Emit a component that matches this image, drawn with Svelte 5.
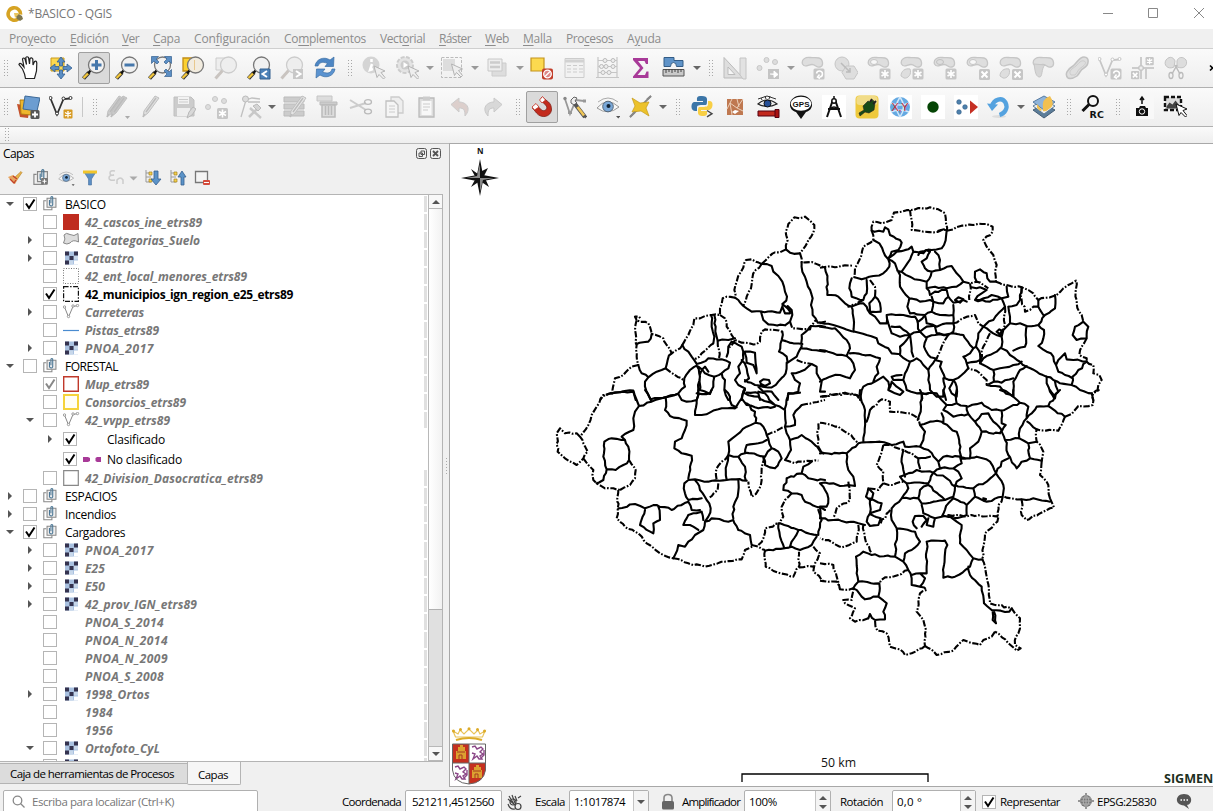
<script>
  // Adjusts tracking so that a label takes the given width.
  function fit(el, width) {
    if (!width) return;
    el.style.letterSpacing = '0px';
    const natural = el.getBoundingClientRect().width;
    el.style.letterSpacing = (width - natural) / el.textContent.length + 'px';
  }

  const menus = [
    ['P', 'ro', 'y', 'ecto', 47, 9], ['', '', 'E', 'dición', 39, 70], ['', '', 'V', 'er', 17, 122], ['', '', 'C', 'apa', 27, 153],
    ['Con', '', 'f', 'iguración', 76, 194], ['Co', '', 'm', 'plementos', 82, 284], ['Vect', '', 'o', 'rial', 45, 380],
    ['', '', 'R', 'áster', 32, 439], ['', '', 'W', 'eb', 24, 485], ['', '', 'M', 'alla', 29, 523], ['Pro', '', 'c', 'esos', 47, 566], ['A', '', 'y', 'uda', 34, 627]
  ].map((m, i, a) => ({ pre: m[0] + m[1], key: m[2], post: m[3], w: m[4], gap: i ? m[5] - a[i - 1][5] - a[i - 1][4] : 9 }));

  const mag = (o = 1, inner = '#f1f1f1') => `<g opacity="${o}"><path d="M1.5 22.5L7 16.5" stroke="#333" stroke-width="4"/><path d="M1.5 22L6.5 17" stroke="#f3c73c" stroke-width="2.4"/><path d="M6 17.500L9 14" stroke="#111" stroke-width="2.4"/><circle cx="14.500" cy="9" r="8" fill="${inner}" stroke="#777" stroke-width="1.300"/></g>`;
  const gmag = `<path d="M1.500 22.500L9 14" stroke="#c9c4c0" stroke-width="3"/><circle cx="14.500" cy="9" r="8" fill="#eee" stroke="#ccc" stroke-width="1.300"/>`;
  const cursor = (x, y, f = '#eee', s = '#b4b4b4') => `<path transform="translate(${x} ${y})" d="M0 0l11 5-4 1.500 4 5-1.500 1.500-4.500-4.500-2 3z" fill="${f}" stroke="${s}"/>`;
  const pencil = (x = 0, f = '#ddd') => `<path transform="translate(${x} 0)" d="M5 22l1-6L17 1l4 2-11 15z" fill="${f}" stroke="#c0c0c0"/><path transform="translate(${x} 0)" d="M8 17L18 3M5 22l2-3" stroke="#bbb" stroke-width="1.300"/>`;
  const badge = (x, y, g) => `<g transform="translate(${x} ${y})"><rect width="11" height="11" rx="1.500" fill="#c6c6c6"/>${g}</g>`;
  const star = '<path d="M5.500 1.500v8M2 3.500l7 4M9 3.500l-7 4" stroke="#fff" stroke-width="1.600"/>';
  const cross = '<path d="M2.500 2.500l6 6M8.500 2.500l-6 6" stroke="#fff" stroke-width="2"/>';
  const turn = '<path d="M3 5a3 3 0 1 1 3 3.500M6 6l-2 2.500 2.500 1.500" fill="none" stroke="#fff" stroke-width="1.500"/>';
  const blob = (extra = '') => `<path d="M1.500 8C0 3 5 1 9 1.500s5-.5 9 .5 5 8 1 9-4-2.500-8-2.500-7 4-9.500-.5z" fill="#dedede" stroke="#c6c6c6" stroke-width="1.300"/>${extra}`;
  const hole = '<ellipse cx="7" cy="6" rx="3.500" ry="2.500" fill="#f7f7f7" stroke="#c6c6c6"/>';
  const leaf = '<path d="M1 20c0-5 4-8 9-7 2 5-2 10-6 9z" fill="#dedede" stroke="#c6c6c6"/>';
  const eye = (c = '#7aa8d8') => `<path d="M1 13Q11 1 23 12Q12 21 1 13z" fill="#f8f8f8" stroke="#999"/><circle cx="12" cy="11.500" r="5.300" fill="${c}" stroke="#567"/><circle cx="12.500" cy="11" r="2" fill="#123"/><path d="M2 7Q12-1 22 7" fill="none" stroke="#aaa"/>`;
  const mini = '<path d="M20 21h4.500l-2.200 2.500z" fill="#555"/>';
  const vline = (c) => `<path d="M1.500 3.500L8 19.500L14.500 4L21 3.500" fill="none" stroke="${c}" stroke-width="1.800"/><g fill="#fff" stroke="${c}"><circle cx="1.500" cy="3" r="1.500"/><circle cx="8" cy="18.500" r="1.500"/><circle cx="14.500" cy="3.500" r="1.500"/><circle cx="21.500" cy="3" r="1.500"/></g>`;
  const raster = '<path fill="#a9c1e0" d="M0 0h13v13H0z"/><path d="M4 9h4v4H4zM9 4h4v4H9z" fill="#c7d7ea"/><path fill="#35334f" d="M0 0h4v4H0zM9 0h4v4H9zM4.500 4.500h4v4h-4zM0 9h4v4H0z"/><path fill="#fff" d="M9 9h4v4H9z"/>';

  const icons = {
    hand: '<path d="M6.500 13L3 8.500Q3.500 6.500 5.500 8L8 11L6.500 3Q7.500 1 9 3L10.500 8.500L9.800 1.500Q11 0 12.500 1.500L13.500 8L14 2.500Q15.500 1 16.800 3L17 9L18.500 5.500Q20.500 4.500 20.800 7L20.500 15L18.500 22.500L9.500 22.500Q9 18 6.500 13z" fill="#fff" stroke="#222" stroke-width="1.200"/>',
    pan: '<path d="M2 2h13v13H2z" fill="#fcd94f" stroke="#c99a1c"/><path d="M12 1l4 5h-2.500v4h-3V6H8zM12 23l4-5h-2.500v-4h-3v4H8zM1 12l5-4v2.500h4v3H6V16zM23 12l-5-4v2.500h-4v3h4V16z" fill="#5b8ec4" stroke="#35608f" stroke-width=".8"/>',
    zin: mag() + '<path d="M14.500 4v10M9.500 9h10" stroke="#4577ab" stroke-width="3"/>',
    zout: mag() + '<path d="M9.500 9h10" stroke="#4577ab" stroke-width="3"/>',
    full: mag() + '<path d="M3.500.5h7L8 3l3 3-2 2-3-3-2.500 2.500zM23.500.5v7L21 5l-3 3-2-2 3-3L16.500.5zM23.500 20.500h-7L19 18l-3-3 2-2 3 3 2.500-2.500z" fill="#5b8ec4" stroke="#35608f" stroke-width=".7"/>',
    zsel: '<path d="M2 2h11v13H2z" fill="#fcd130" stroke="#c28d14" stroke-width="1.300"/>' + mag(1, '#f2ecdf') + '<path d="M13.500 4v10" stroke="#e8c88d"/>',
    zlay: '<path d="M2 2h9v12H2z" fill="#eee" stroke="#ccc"/>' + gmag,
    zlast: mag() + '<path d="M13 13h10v10H13z" fill="#4d82b8" stroke="#35608f"/><path d="M20 15l-4.500 3 4.500 3" fill="none" stroke="#fff" stroke-width="2"/>',
    znext: gmag + '<path d="M13 13h10v10H13z" fill="#c8c8c8"/><path d="M16 15l4.500 3-4.500 3" fill="none" stroke="#fff" stroke-width="2"/>',
    refresh: '<path d="M2 10C3 3 11 0 17 4l4-3-.5 9.500H12l2.500-3C9 5 6 7 5 10z" fill="#4d86c4" stroke="#3b6ea5" stroke-width=".7"/><path d="M22 13c-1 7-9 10-15 6l-4 3 .5-9H12l-2.500 3C15 18 18 17 19 13z" fill="#5b93d0" stroke="#3b6ea5" stroke-width=".7"/>',
    info: '<circle cx="9" cy="9" r="8.500" fill="#d4d4d4"/><path d="M9.500 3v3M10 8L8 14l3-1" stroke="#fff" stroke-width="2.500" fill="none"/>' + cursor(12, 10),
    act: '<circle cx="10" cy="9" r="8" fill="#e4e4e4" stroke="#ccc" stroke-width="2" stroke-dasharray="4 1.500"/><circle cx="10" cy="9" r="4.500" fill="#ccc"/><path d="M8.500 6l4.500 3-4.500 3z" fill="#fff"/>' + cursor(13, 10),
    sel: '<path d="M1.500 1.500h20v20h-20z" fill="none" stroke="#bbb" stroke-dasharray="3 1.500"/><path d="M3 3h12v12H3z" fill="#ddd"/>' + cursor(11.500, 8),
    form: '<path d="M7 7h14v13H7z" fill="#ddd" stroke="#ccc"/><path d="M3 3h14v12H3z" fill="#eee" stroke="#c8c8c8"/><path d="M5 6.500h10M5 11h10" stroke="#ccc" stroke-width="2.500"/>',
    desel: '<path d="M1 2h13v13H1z" fill="#fcd94f" stroke="#c4941d" stroke-width="1.200"/><rect x="12" y="12.500" width="11" height="11" rx="2" fill="#c23d2a"/><circle cx="17.500" cy="18" r="3.800" fill="#d88" stroke="#fff" stroke-width="1.300"/><path d="M15 20.500l5-5" stroke="#fff" stroke-width="1.300"/>',
    table: '<path d="M2 2.500h19v19H2z" fill="#f2f2f2" stroke="#ccc"/><path d="M2 5h19" stroke="#d2d2d2" stroke-width="3"/><path d="M4 9.500h4M10 9.500h4M16 9.500h4M4 13h4M10 13h4M16 13h4M4 16h4M10 16h4M16 16h4" stroke="#ccc"/>',
    abacus: '<path d="M2 1v21M21 1v21M0 21.500h23M2 4.500h19M2 10.500h19M2 16.500h19" stroke="#c6c6c6" stroke-width="1.200"/><g fill="#eee" stroke="#bbb"><circle cx="9" cy="4.500" r="2"/><circle cx="17" cy="4.500" r="2"/><circle cx="5.500" cy="10.500" r="2"/><circle cx="10" cy="10.500" r="2"/><circle cx="17" cy="10.500" r="2"/><circle cx="7" cy="16.500" r="2"/><circle cx="13" cy="16.500" r="2"/></g>',
    sigma: '<path d="M4 2h15v6h-2l-1.500-3H9l5.500 7L8.500 19h7.500l1.500-3.500h2V22H4v-1.500l7-8.500L4 4z" fill="#a83a98"/>',
    measure: '<path d="M2 1.500h10v3h9v6h-6.500q0-4-3-4t-3 4H2z" fill="#5f93c8" stroke="#335c86"/><path d="M1 13.500h21v6.500H1z" fill="#c9c9c9" stroke="#555"/><path d="M4 13v4M7 13v3M10 13v4M13 13v3M16 13v4M19 13v3" stroke="#444"/>',
    cad: '<path d="M1 1.500L20 22H1z" fill="#dedede" stroke="#bbb"/><path d="M5 11l7 7.500H5z" fill="#f6f6f6" stroke="#bbb"/><path d="M17 2h6v21h-3L17 19z" fill="#e2e2e2" stroke="#c4c4c4"/>',
    move: '<g fill="#ddd" stroke="#c8c8c8"><circle cx="3.500" cy="12" r="2.500"/><circle cx="10.500" cy="4" r="2.500"/><circle cx="19" cy="6" r="2.500"/></g><path d="M12 13h11v10H12z" fill="#c4c4c4"/><path d="M14 18h4v-3l4 3.500-4 3V19" fill="#fff" stroke="#fff"/>',
    b1: blob() + badge(12.500, 12.500, turn),
    b2: '<circle cx="8" cy="8" r="7" fill="#dedede" stroke="#c6c6c6"/><path d="M12 10h8l4 6.500-4 6.500h-8l-4-6.500z" fill="#dedede" stroke="#c6c6c6"/><path d="M7 7l9 9M16 12v4h-4" stroke="#bbb" stroke-width="1.500" fill="none"/>',
    b3: blob(hole) + badge(12.500, 12.500, star), b4: blob() + leaf + badge(12.500, 12.500, star), b5: blob('<ellipse cx="7" cy="6" rx="3.500" ry="2.500" fill="#ddd" stroke="#c0c0c0"/>') + badge(12.500, 12.500, star),
    b6: blob(hole) + badge(13, 13, cross), b7: blob() + leaf + badge(13, 13, cross),
    b8: blob() + '<path d="M2 8c1 5 1 12 5 13s2-9 6-12z" fill="#d6d6d6" stroke="#c6c6c6"/>',
    b9: '<path d="M3 22c-4-4 0-9 5-12 4-3 6-9 11-9 6 0 5 8 0 11-4 2-4 5-7 8-3 2-7 3-9 2z" fill="#dedede" stroke="#c2c2c2" stroke-width="1.500"/><path d="M6 19c-3-4 1-6 5-9 3-3 5-6 8-5s1 4-2 6c-4 2-4 5-7 8z" fill="none" stroke="#ccc"/>',
    b10: vline('#c6c6c6') + badge(12.500, 12.500, turn),
    b11: '<path d="M10 1v22M1 12h22M15 12v11" stroke="#ccc" stroke-width="2"/><path d="M8 10h4v4H8z" fill="#eee" stroke="#c0c0c0"/>' + `<g transform="translate(14.500 1) scale(.75)">${badge(0, 0, star)}</g><g transform="translate(0 15) scale(.75)">${badge(0, 0, cross)}</g>`,
    b12: '<path d="M10 11C4 14-1 9 2 4c4-5 8-2 9 1zM13 11c8 3 11-3 9-7-3-4-8-3-9 1z" fill="#ddd" stroke="#c4c4c4"/><path d="M11 9l5 9M13 9l-5 9" stroke="#bbb" stroke-width="1.500"/><ellipse cx="7" cy="19.500" rx="2" ry="3" fill="none" stroke="#bbb" stroke-width="1.300"/><ellipse cx="17" cy="19.500" rx="2" ry="3" fill="none" stroke="#bbb" stroke-width="1.300"/>',
    source: '<path d="M1 9l13 2-2 12-8-1z" fill="#c4512b"/><path d="M4 5l13 0-2 15-10-1z" fill="#efb62c" stroke="#b37d13"/><path d="M9 1l15 2-3 13-14-2z" fill="#6c9dd1" stroke="#3c6997"/><rect x="14.500" y="15" width="9" height="9" rx="1.500" fill="#555"/><path d="M19 16.500v6M16 19.500h6" stroke="#fff" stroke-width="1.800"/>',
    newv: vline('#333') + '<rect x="14.500" y="14.500" width="9" height="9" rx="1" fill="#d69a22"/><path d="M19 16v6.500M16 17.500l6 3.500M22 17.500l-6 3.500" stroke="#fff" stroke-width="1.400"/>',
    pens: pencil(-4, '#ccc') + pencil(0, '#c8c8c8') + '<path d="M19 21h5l-2.500 3z" fill="#aaa"/>', pen: pencil(-1),
    save: '<path d="M2 2h17l3 3v16H2z" fill="#ccc" stroke="#c0c0c0"/><path d="M6 2h11v7H6z" fill="#f2f2f2"/><path d="M7 4.500h9M7 7h9" stroke="#ccc"/><path d="M5 13h13v8H5z" fill="#eee"/><path d="M15 23l2-6 4-5 3 2-4 6z" fill="#d8d8d8" stroke="#b8b8b8"/>',
    pts: '<g fill="#ddd" stroke="#c8c8c8"><circle cx="3" cy="12" r="2.500"/><circle cx="10" cy="4" r="2.500"/><circle cx="19" cy="6" r="2.500"/></g>' + badge(12, 13, star),
    vtx: '<path d="M3 22L8 5l6-2 8 1M10 7l12 0" fill="none" stroke="#c0c0c0" stroke-width="1.300"/><circle cx="7.500" cy="4" r="3" fill="#ddd" stroke="#bbb"/><path d="M12 13l11 10M11 22l8-8" stroke="#c8c8c8" stroke-width="2.500"/><path d="M15 11l4-2 4 4-3 3z" fill="#d4d4d4" stroke="#bbb"/>',
    attrs: '<path d="M1 2h20v5H1zM1 9h20v5H1zM1 16h20v5H1z" fill="#ccc" stroke="#bbb"/>' + pencil(2, '#e4e4e4'),
    trash: '<path d="M1 1h15v5H1z" fill="#ddd" stroke="#c6c6c6"/><path d="M4 7h17v3H4z" fill="#ccc" stroke="#bbb"/><path d="M6 10h13v12H6z" fill="#ddd" stroke="#bbb" stroke-width="1.500"/><path d="M9.500 11v9M12.500 11v9M15.500 11v9" stroke="#bbb" stroke-width="1.500"/>',
    cut: '<path d="M1 5l16 10M1 13l16-5" stroke="#ccc" stroke-width="2"/><ellipse cx="19" cy="7" rx="3.500" ry="2.300" fill="none" stroke="#bbb" stroke-width="1.300"/><ellipse cx="19" cy="16.500" rx="3.500" ry="2.300" fill="none" stroke="#bbb" stroke-width="1.300"/>',
    copy: '<path d="M9 2h8l4 4v12H9z" fill="#eee" stroke="#ccc" stroke-width="1.300"/><path d="M4 6h8l4 4v12H4z" fill="#f5f5f5" stroke="#c0c0c0" stroke-width="1.300"/><path d="M7 11h6M7 14h6M7 17h6" stroke="#ccc"/>',
    paste: '<path d="M4 3h15v19H4z" fill="#ddd" stroke="#bbb" stroke-width="1.300"/><path d="M6.500 6h10v14h-10z" fill="#f8f8f8"/><path d="M8 1.500h7v4H8z" fill="#ccc"/><path d="M8 9h7M8 12h7M8 15h5" stroke="#ccc"/>',
    undo: '<path d="M3 9.500l8-6.500v4c7 0 13 6 6 14 0-6-1-8-6-8v4z" fill="#dccfcc" stroke="#ccc"/>', redo: '<path d="M21 9.500l-8-6.500v4C6 7 0 13 7 21c0-6 1-8 6-8v4z" fill="#d8d8d8" stroke="#c9c9c9"/>',
    magnet: '<path d="M12 2l-1.500 3 5 5c4 4-2 8-5 4l-4-4-4 3 4 5c5 6 14 4 15-3 0-4-1-6-3-8z" fill="#c32b1d" stroke="#7d1f16" stroke-width=".8"/><path d="M12.500 1.500L9.500 5l2.500 3 3.500-3zM6 8.500L2 12l2.500 3L9 12z" fill="#fff" stroke="#c32b1d" stroke-width=".8"/>',
    tools: '<path d="M2 4l5 15L13 5l8 1" fill="none" stroke="#999" stroke-width="1.800"/><path d="M5 19h4v-3H5zM20 4.500h3v3h-3z" fill="#999"/><path d="M8 5l3-3 3 1-2 3 2 2-3 2-3-2z" fill="#eee" stroke="#666"/><path d="M12 9l10 13" stroke="#555" stroke-width="4"/><path d="M14.500 12l6.500 8.500" stroke="#f0c657" stroke-width="2.600"/><circle cx="2" cy="3.500" r="1.700" fill="#888"/>' + mini,
    eye: eye() + mini, bolt: '<path d="M22 1L1 22" stroke="#888" stroke-width="1.800"/><path d="M3 3l8 5 9-1-3 6 3 8-8-5-9 1 3-6z" fill="#ecc22b" stroke="#c49a18" stroke-width=".7"/><path d="M18 4.500L22 1M1 22l5-5" stroke="#888" stroke-width="1.800"/>',
    py: '<path d="M12 1c-6 0-5 2-5 5h6v1H4c-3 0-4 9 1 9h2v-3c0-3 1-3 8-3 2 0 2-1 2-6 0-2-2-3-5-3z" fill="#3c76a8"/><path d="M12 21c6 0 5-2 5-5h-6v-1h8c4 0 5-9 1-9h-2v3c0 3-2 3-8 3-2 0-2 1-2 6 0 2 2 3 4 3z" fill="#f8cf45"/><path d="M17 15.500l5 3.200-5 3.200" fill="none" stroke="#444" stroke-width="1.400"/>',
    brown: '<path d="M4 4h16v16H4z" fill="#bf7850"/><path d="M4 14l5-10M9 20L7 8l7 5 6-9M14 13l6 3M14 4l2 8" stroke="#ecd0ba" fill="none"/><path d="M9 17l3-2 4 1-4 3z" fill="#fff"/>',
    redeye: '<path d="M2 9Q11 1 21 9Q11 14 2 9z" fill="#eee" stroke="#222" stroke-width="1.200"/><circle cx="11.500" cy="8.500" r="3.500" fill="#264f96" stroke="#111"/><path d="M2 4l9-3 9 3M5 3l1 2M9 1l1 3M14 1l-1 3" stroke="#333" fill="none"/><path d="M2 16h20v5H2z" fill="#c2281d" stroke="#501"/><path d="M19 14.500h4v8h-4z" fill="#a11" stroke="#501"/>',
    gps: '<path d="M12 24L7 17C-3 14 0 .5 12 .5s15 13.500 5 16.500z" fill="#111"/><ellipse cx="12" cy="8.800" rx="10.300" ry="7" fill="#fff"/><text x="3.500" y="11.700" fill="#111" font-family="Liberation Sans" font-size="8" font-weight="700" textLength="17">GPS</text>',
    compass: '<path fill="#fff" d="M0 0h24v24H0z"/><path d="M10.500 6L5 22M13.500 6l5.500 16M6 14h12" stroke="#111" stroke-width="2"/><path d="M12 1v4M8 14q4-4 8 0" stroke="#111" stroke-width="1.500" fill="none"/><circle cx="12" cy="6" r="2.200" fill="#fff" stroke="#111" stroke-width="1.500"/>',
    plug: '<rect x=".5" y=".5" width="23" height="23" rx="4" fill="#eec93c"/><rect x="1.500" y="1" width="21" height="9" rx="3" fill="#f1dc88"/><path d="M4 18l5-3-1-4 5-5 2 1 3-2 2 3-1 7-5 3-4-1-5 4z" fill="#184b16" stroke="#222" stroke-width=".6"/><path d="M15 7l2-3M18 9l3-3" stroke="#222" stroke-width="2"/>',
    xy: '<path fill="#fff" d="M0 0h24v24H0z"/><circle cx="12" cy="12" r="10" fill="#64a9e2"/><path d="M3 8q9 4 18 0M3 17q9-4 18 0M12 2q-7 10 0 20M12 2q7 10 0 20" stroke="#d2e8fa" fill="none" stroke-width="1.500"/><text x="3.500" y="16" font-family="Liberation Sans" font-size="11" fill="#c42b37" textLength="17">X,Y</text>',
    dot: '<path fill="#fff" d="M0 0h24v24H0z"/><circle cx="12" cy="12" r="5.700" fill="#054505"/>',
    dots: '<path fill="#fff" d="M0 0h24v24H0z"/><g fill="#4e81ad" stroke="#2d5b84" stroke-width=".6"><circle cx="5" cy="7" r="2.300"/><circle cx="5" cy="17" r="2.300"/><circle cx="11" cy="12" r="2.300"/></g><path d="M16 5.500l8 6.500-8 7z" fill="#c52f23"/>',
    blue: '<ellipse cx="12" cy="21.500" rx="7" ry="1.500" fill="#ddd"/><path d="M5 11C7 4 15 2 18.500 7.500c3 6-1 11-6 12.500" fill="none" stroke="#54a2df" stroke-width="4.300"/><path d="M0 8.500l5 7.500 6-6.500z" fill="#54a2df"/>',
    stack: '<path d="M1 15l11 8 11-8-11-6z" fill="#5c7d99" stroke="#435d75"/><path d="M1 11l11 8 11-8-11-6z" fill="#eee" stroke="#5b7c99"/><path d="M1 7l11 8 11-8-11-6z" fill="#8fb4da" stroke="#587ca2"/><path d="M11 14q-2-10 7-13 6 9-1 13-3 3-6 2zM5 9l5 6-2 1-3-3z" fill="#f2c050"/>',
    rc: '<circle cx="12" cy="6" r="5" fill="#f6f6f6" stroke="#111" stroke-width="2"/><path d="M8 9.500L1.500 16" stroke="#111" stroke-width="3"/><text x="8.500" y="22.500" fill="#111" font-family="DejaVu Sans" font-weight="700" font-size="9.500" textLength="14.500">RC</text>',
    cam: '<path fill="#f8f8f8" d="M0 0h24v24H0z"/><path d="M12 3v6M10 5l2-3 2 3" stroke="#111" stroke-width="1.500" fill="none"/><path d="M6 13h3l1-2h5l1 2h2v8H6z" fill="#111"/><circle cx="12" cy="16.500" r="2.700" fill="none" stroke="#fff"/>',
    snap: '<path d="M2 2h16v13H2z" fill="#ddd" stroke="#111" stroke-width="2.400" stroke-dasharray="4 2"/><path d="M3.500 13.500v-2l3-4 3 2 3-4 4 5v3z" fill="#444"/>' + cursor(13, 9, '#fff', '#111'),
    grp: '<path d="M4 6H1v11h10v-3" fill="none" stroke="#888" stroke-width="1.300"/><path d="M5 3h11v11H5z" fill="#eee" stroke="#888" stroke-width="1.300"/><path d="M8 5v6q2.500 3 4 0V1.500q-1-1.500-2.200 0V9" fill="none" stroke="#497594" stroke-width="1.300"/>'
  };
  const row1 = 'H0 hand pan zin* zout full zsel zlay zlast znext refresh H info act A sel A form A desel table abacus sigma measure D H cad move A b1 b2 b3 b4 b5 b6 b7 b8 b9 b10 b11 b12'.split(' ');
  const row2 = 'H0 source newv S H1 pens pen save pts vtx D attrs trash cut copy paste undo redo H magnet* tools eye bolt D H py brown redeye gps compass plug xy dot dots blue D stack H rc H cam snap'.split(' ');

  // level, arrow, checkbox, symbol, label, width, style
  const tree = [
    [0, 'v', 'x', 'grp', 'BASICO', 41], [1, '', 'o', 'red', '42_cascos_ine_etrs89', 117, 'i'], [1, '>', 'o', 'poly', '42_Categorias_Suelo', 115, 'i'],
    [1, '>', 'o', 'ras', 'Catastro', 49, 'i'], [1, '', 'o', 'dot', '42_ent_local_menores_etrs89', 162, 'i'], [1, '', 'x', 'dash', '42_municipios_ign_region_e25_etrs89', 208, 'b'],
    [1, '>', 'o', 'vec', 'Carreteras', 59, 'i'], [1, '', 'o', 'line', 'Pistas_etrs89', 74, 'i'], [1, '>', 'o', 'ras', 'PNOA_2017', 69, 'i'],
    [0, 'v', 'o', 'grp', 'FORESTAL', 53], [1, '', 'g', 'mup', 'Mup_etrs89', 64, 'i'], [1, '', 'o', 'yel', 'Consorcios_etrs89', 101, 'i'], [1, 'v', 'o', 'vec', '42_vvpp_etrs89', 85, 'i'],
    [2, '>', 'x', '', 'Clasificado', 58, 't'], [2, '', 'x', 'mag', 'No clasificado', 75, 't'], [1, '', 'o', 'gray', '42_Division_Dasocratica_etrs89', 178, 'i'],
    [0, '>', 'o', 'grp', 'ESPACIOS', 52], [0, '>', 'o', 'grp', 'Incendios', 51], [0, 'v', 'x', 'grp', 'Cargadores', 60],
    [1, '>', 'o', 'ras', 'PNOA_2017', 69, 'i'], [1, '>', 'o', 'ras', 'E25', 20, 'i'], [1, '>', 'o', 'ras', 'E50', 20, 'i'], [1, '>', 'o', 'ras', '42_prov_IGN_etrs89', 112, 'i'],
    [1, '', 'o', '', 'PNOA_S_2014', 79, 'i'], [1, '', 'o', '', 'PNOA_N_2014', 83, 'i'], [1, '', 'o', '', 'PNOA_N_2009', 83, 'i'], [1, '', 'o', '', 'PNOA_S_2008', 79, 'i'],
    [1, '>', 'o', 'ras', '1998_Ortos', 65, 'i'], [1, '', 'o', '', '1984', 28, 'i'], [1, '', 'o', '', '1956', 28, 'i'], [1, 'v', 'o', 'ras', 'Ortofoto_CyL', 75, 'i'], [1, '', 'o', 'ras', '', 0, 'i']
  ];
  const symbols = {
    red: '<path d="M0 0h16v16H0z" fill="#bf2c1f"/>', poly: '<path d="M1 3Q3 0 7 2.500T15 1.500L15.500 10Q10 7 7 11Q4 13 .5 11Q3 7 1 3z" fill="#ddd" stroke="#888"/>',
    dot: '<path d="M.5.5h15v15H.5z" fill="none" stroke="#777" stroke-dasharray="1 1.500"/>', dash: '<path d="M.6.6h14.800v14.800H.6z" fill="none" stroke="#111" stroke-width="1.200" stroke-dasharray="5 1.500 1.500 1.500"/>',
    vec: '<path d="M1.500 3L5.500 13L10 2.500L15 1.500" fill="none" stroke="#888"/><g fill="#fff" stroke="#888" stroke-width=".8"><circle cx="1.500" cy="3" r="1.200"/><circle cx="5.500" cy="12.500" r="1.200"/><circle cx="10" cy="2" r="1.200"/><circle cx="14.500" cy="1.500" r="1.200"/></g>',
    line: '<path d="M0 8.500h16" stroke="#4a8bd0" stroke-width="1.200"/>', ras: `<g transform="translate(2 1.500)">${raster}</g>`,
    mup: '<path d="M.7.7h14.600v14.600H.7z" fill="none" stroke="#c0392b" stroke-width="1.400"/>', yel: '<path d="M1 1h14v14H1z" fill="#fffef6" stroke="#f5d33c" stroke-width="2"/>',
    gray: '<path d="M.7.7h14.600v14.600H.7z" fill="none" stroke="#888" stroke-width="1.200"/>', mag: '<path d="M0 6h5l2 1v3l-2 1H0zM14 6h4v5h-4l-1.500-1V7z" fill="#a83a98"/>'
  };

  // Municipality borders by sheet, in thirds of a pixel: s = solid, d = dash-dot.
  const sheets = [
    { x: 96, y: 56, s: 'M723 148L735 158 765 160M770 188L772 215 785 245 803 295 798 315 803 345 812 355 818 368 840 365M650 192L680 198 685 215 700 228 712 245 720 275 726 290 712 320 705 338 680 334 620 335 605 325 595 318 580 300 570 293M712 320L720 340 735 340M712 312L728 325 735 335M648 335L655 360 670 373 720 376 735 365 742 345 740 330 728 318M798 378L840 380M712 395L710 420 702 455 725 470 728 488 740 480 755 470 770 440 770 405 795 380M710 420L745 430 772 432M770 445L800 450 840 455M508 345L512 380 515 410 518 422 550 420 570 415M498 345L500 380 508 410 505 430M412 435L430 455 440 470 455 492M320 402L310 425 275 432M380 460L368 480 362 505 335 515 310 532 290 520 280 495M203 580L235 575 265 575 272 600M310 532L300 545 308 580 318 600M318 598L370 590 400 580 420 560 418 535 435 510 455 497M455 492L490 475 530 478 555 488 550 505 530 520 508 530 480 520 460 500M550 440L560 425 590 440 595 475 580 500 585 520 570 540 580 555 600 565M545 470L550 440M600 455L630 458 632 490 635 520 625 495 605 488 600 460M590 480L605 505 612 535 600 545M600 540L630 555 680 562 700 545 722 520 725 488M645 545L655 538 672 540 675 550 660 558 648 552 645 545M470 510L480 500 490 515M468 515L465 570 495 582 505 560 508 530M455 497L465 530 460 570 455 600M530 520L540 540 538 570 550 600M600 565L590 600M605 578L640 580 645 600M640 560L655 575 680 575 700 600M740 520L750 540 765 550 760 575 730 580 728 600M740 520L765 515 800 492 815 500 815 520 830 545 825 575 840 575', d: 'M723 148L728 120 722 95 730 72 748 52 765 55 780 50 795 62 808 75 805 98 790 120 780 140 765 160M723 148L705 157 690 157 672 170 650 192M765 160L770 188 800 186 822 195 840 205M650 192L620 178 603 180 588 215 575 245 568 270 570 293M650 192L632 210 622 235 618 265 605 290 595 318M570 293L545 290 533 295 525 325 525 345 500 345 480 348 465 355 448 355 445 375 430 405 412 435M735 365L742 385 795 388 798 378 812 360M525 345L540 355 545 380 560 405 570 420 590 428 635 432 645 425 650 395 660 388 712 395M505 430L470 460 450 477M412 435L395 450 380 460 365 435 355 415 320 402 310 370 275 360M275 360L270 350 282 350 288 358M275 360L272 400 275 435 275 470 280 495M280 495L260 500 235 525 210 535 203 580M203 580L175 588 165 600M362 505L385 522 415 540M518 422L522 450 522 475M755 480L775 488 800 492M570 420L550 445' },
    { x: 371, y: 56, s: 'M355 92L372 88M155 92L190 95 195 82 205 88 210 105 240 120 245 128 235 150 215 155 205 175M380 92L378 110 372 135 365 145 335 150 300 155 295 165M160 120L178 130 190 155 205 178 208 200 190 220 160 228 125 238 103 232M15 203L22 240 22 285 55 290 75 310 95 320 98 330M205 178L225 190 232 210 240 225 240 260 250 275 268 295 262 320 270 340M205 175L230 155 265 148 275 140 280 155 262 190 245 215M280 155L310 160 318 150 330 155 320 175 305 185 315 205 335 215 360 210 360 180 345 155M232 212L270 230 300 240 320 245 335 215M360 210L395 198 410 220 430 245 410 260 380 265 345 260 320 265 320 245M470 245L465 215 480 208 500 220 510 245 528 245M790 365L765 380 758 405 770 420 800 415 805 380 790 365M800 485L760 480 740 478 735 460 715 480 708 495 700 470 680 455 655 438 670 415 672 390 655 375 675 345 705 325 705 285M800 485L775 510 758 530 755 555 780 570 815 580 820 600M708 495L715 515 735 525 758 535M755 555L720 550 700 540 680 530 650 515 620 500 600 485 570 465 545 445M680 530L680 550 690 575 705 595 715 575 705 545M655 300L655 320 670 345M605 262L600 300 590 315 565 320M560 260L565 290 545 295 515 285 480 300 465 300M465 300L485 280 500 270 480 262 455 262M465 300L510 305 545 295 555 320M555 320L535 340 520 360 490 380 475 400 468 440 480 460 480 490 520 510 540 505 580 495 605 485M565 320L570 350 570 370M530 395L538 388 548 393 542 405 530 395M570 370L600 370 620 378 615 440 580 452M620 378L655 375M570 370L550 390 545 410 545 440 530 455 490 475 480 490M490 380L520 400 545 410M320 265L330 285 345 275 380 270 385 290 370 310 340 305 335 290M385 290L400 308 430 300 440 305M405 300L415 292 430 298 420 308 405 300M268 295L300 305 330 300 340 305M340 305L335 335 360 345 400 345 400 315M270 340L315 345 335 335M315 345L320 370 350 380 380 370 400 370 400 345M315 345L295 365M200 345L250 345 285 350 300 395 320 380 340 378M345 380L350 400 385 405 400 395 400 370M200 345L205 370 215 400 240 410 270 405 300 395M215 380L240 380 260 395 270 405M270 405L260 420 240 440 240 465 270 485 290 475 310 495 325 510 345 480 350 475M270 405L275 445 280 470M300 395L320 415 312 440 325 465 345 475M320 412L345 405 385 402 430 405 450 435 460 445 468 440M460 445L450 460 430 470 440 490 470 485 480 480M445 505L425 525 400 540 375 535 360 500 365 485 345 480M400 540L410 560 410 590 395 580 388 565 400 540M325 510L325 540 330 570 350 590 370 590 375 560 370 535M270 485L255 520 250 540 260 570 290 580 325 580M250 540L220 540 215 530 245 525M205 570L215 545 230 560 250 575 240 585 225 580 205 570 205 545 190 530 165 545 130 560 120 600M520 510L522 545 545 548 580 535M500 555L540 560 580 590 580 545 600 510 620 498M85 320L130 310 140 320 150 340 165 350 180 370 200 370 200 345M95 235L88 265 95 290 130 300 140 280 140 240M165 290L180 310 182 335 150 335 148 310 165 290M98 330L100 395M0 368L40 375 70 385 105 395 140 405 170 415 175 430 205 445 215 460 235 462M0 380L45 385 60 400 80 420 90 445 80 468 40 460 0 450M90 460L150 465 180 475 170 500 175 520 160 545M80 468L100 490 105 510 90 535 60 525 30 530 0 545M305 580L305 600', d: 'M155 92L160 65 185 70 215 60 222 38 270 30 330 22 355 28 375 40 378 70 380 92M270 30L275 60 275 90 310 95 340 97 365 90 380 90M380 92L400 88 425 77 460 75 500 72 518 80 518 95 490 120 500 140 520 165 530 195 525 215 528 245M155 92L160 120 130 140 118 180 105 205 103 232M0 203L20 200 100 198M430 245L450 250 470 245 490 255 505 265M528 245L560 255 605 262 625 270 640 280 655 300M655 300L690 292 710 285 730 265 755 250 768 242 770 310 785 345 790 365M800 415L785 440 778 465 800 475 800 485M800 485L820 495 820 520 838 525 845 540 835 555 832 575 815 580M605 262L605 300 615 335 640 320 655 320M450 250L448 300M555 320L552 350 555 375 540 400M510 400L490 440 480 480M400 370L430 355 465 345 475 370 490 380M385 405L365 440 350 475M440 490L445 505 480 520 500 540 500 555M522 545L500 555M150 240L165 260 165 290M130 300L95 315M5 590L50 582 110 585 120 600' },
    { x: 96, y: 246, s: 'M155 280L175 270 185 238M185 238L175 200 178 155 200 145 240 150 250 170 252 210 235 225 212 240 185 238M240 150L230 140 265 120 265 85 270 65 282 48M200 10L265 2 275 30 282 48 320 35 365 20 400 12M300 0L320 35M400 12L410 30 425 35 455 30M460 0L455 30 450 75 470 75 520 58 570 55 590 25M455 10L495 10 500 0M540 0L555 20 560 45 575 52M590 25L605 45 640 55 690 50M600 0L590 25M600 10L640 20 690 45 660 10 640 5M605 40L630 65 632 98M362 22L360 60 375 78 425 92 420 120 410 145 390 155 388 175 410 190 440 197 435 230 430 265M430 270L450 268 490 275 545 270 560 268 605 272M632 98L605 110 575 135 550 155 550 195M632 98L655 110 665 135M550 195L545 225 545 270M550 195L580 200 600 190 605 165 640 160 665 150M580 200L600 230 602 270M665 135L680 175 660 200 600 188M680 175L700 185 710 205 690 235 660 225 655 200M720 110L725 130 735 150 738 180 720 210M735 150L770 135 800 155 835 190M720 110L750 105 745 75 770 45M720 110L720 60 690 45M720 55L730 10 765 8M725 265L770 250 790 265 805 268 840 270M725 265L715 300 740 310M800 215L775 230 770 250M740 310L770 315 780 335 840 360M430 270L418 280 420 310 430 330 470 325M450 270L465 300 485 330 497 355 490 380 480 395M430 335L440 360 465 360M580 270L578 320 565 350 565 385M480 395L500 385 550 395 565 390M565 390L580 420 615 435 620 465M480 395L475 420 450 435 430 455 420 470 400 465 385 505M430 375L470 365 475 390M430 375L415 405 435 405 460 420M430 335L380 360 335 345 300 355 270 342 220 355M300 360L285 405 325 430 325 400 345 390 340 350M705 400L760 420 815 435M700 400L705 440 718 475M660 482L718 475 740 470 765 480M760 422L735 470M765 480L800 465 815 440M820 360L830 390 820 435', d: 'M200 8L175 15 155 50 140 75 130 105 105 140M105 140L95 130 60 130 45 115 35 130 38 185 60 205 95 225 115 205 128 185 115 160 105 140M115 205L130 225 145 240 145 270 155 280 180 295 225 300M252 210L272 240 270 265 255 285 225 300M770 45L840 30M665 135L690 125 720 110M550 195L530 215 515 235 515 270M655 200L650 235 650 270 640 300 620 320 612 295 610 275M720 210L750 220 775 215 820 212M740 310L720 330 710 350 715 380 705 400M820 100L820 170 835 190M520 280L518 300 490 325M220 300L218 355 215 385 240 410 280 430 305 460 345 490 385 505M385 505L430 520 480 530 540 515 590 508 600 480 625 468M620 465L640 470 660 480M640 465L655 445 660 415 705 400M660 482L662 530 700 548 745 560 762 530 762 485M762 532L805 530M805 470L825 490 810 520 805 545 840 575' },
    { x: 371, y: 246, s: 'M120 0L125 35 135 60 135 90 130 155M150 60L140 95M300 0L305 10 303 50 293 90M305 10L350 10 365 30 380 45M0 190L80 190 115 160 180 155 215 165 250 155 255 170 300 170 310 150 315 125 300 105 330 95 365 95 370 100M365 70L370 100 410 125 418 160 425 205M380 45L370 60 400 80 445 72 440 48 410 40 380 45M410 0L410 40M370 0L378 30M445 50L485 38 515 60 545 62 600 38 580 20 540 0M445 72L465 95 485 72 505 70 520 95 545 120 540 130 485 125 465 95M545 62L545 100 557 105 545 125M485 125L475 155 450 175 450 205M600 38L625 50 620 85 600 115 598 145M580 0L580 20M545 125L555 150 598 145 625 160 630 205M690 0L705 20 685 48 650 50 620 85M685 48L735 80M720 0L700 20M622 95L650 118M650 155L625 160M555 150L565 195 590 235 605 215 630 205 665 212M690 335L640 325 605 328M565 205L545 215 528 250M425 205L470 200 510 215 528 250 550 285 548 320 500 335M528 250L500 275 460 295M450 205L420 200 370 200 355 215M355 215L360 235 400 235 425 220 420 200M300 170L325 180 355 215M80 190L85 240 100 260 105 288 60 288 40 280 0 280M0 280L15 300 25 325 20 350 0 350 0 385 40 390 115 400 135 405M250 180L245 205 250 240 255 260M295 205L300 235M295 205L330 200M240 260L290 240 340 248 325 280 260 280 240 260M340 248L365 235M340 248L380 265 405 290 400 320 375 330 325 285M405 290L410 275 425 265 415 245 400 235M405 285L460 295 465 320 440 345 400 325M490 325L498 327 493 333 490 325M500 335L465 320M325 285L300 300 295 325 305 340 340 335 375 330M260 280L265 295 245 325 295 325M305 345L310 370 345 385 365 380 385 340 400 325M345 385L340 410 320 405 325 385M245 325L215 355 215 390 230 415M290 415L278 395 285 378 310 378 320 390 305 410M230 415L285 425 290 440 300 455 275 480 255 490 250 515M230 415L225 500 155 495 130 485 108 500 110 550 115 575M145 295L138 320 150 330 150 370 180 360 185 340 150 325M145 295L160 310 155 330M150 370L140 395 150 408 175 405 182 385 150 372M385 375L410 395 425 405 420 460 440 480 460 505 487 508M400 385L440 375 440 345M365 380L400 378M225 500L250 515 265 540M115 575L178 580 175 620 135 628 100 595 115 575M265 540L275 565 275 585 300 590 315 565 300 550 275 555M320 455L320 550 300 550M320 455L375 452 382 465 375 490 370 563 405 560 450 530 460 505M445 530L450 555 485 590 492 640 515 660 568 665 575 655M522 665L528 700 518 690 518 665M165 690L150 672 145 685M175 620L200 640 190 665 195 688 165 690', d: 'M145 685L105 695 90 685 105 655 75 640 70 630 95 630 100 595M0 20L75 8 120 20M0 98L55 110 100 145 115 160M150 60L185 28 210 35 210 65 270 70 295 85 300 105M735 80L715 122 650 118 650 155 670 185 665 215M735 80L755 72 775 48 818 45 820 10 840 0M665 215L660 255 685 285 690 325M605 328L550 318M690 325L702 352 670 365 620 390 605 375 605 330M548 320L535 345 532 395 495 430 490 470 487 505M85 275L90 330 50 355 40 385M190 165L180 200 170 225 190 245 190 280M190 165L215 165 250 180 295 205M190 280L220 285 255 275M182 400L215 355M190 280L175 300 145 295M385 375L535 380M130 405L135 445 155 490M115 405L110 455 65 472 25 450 0 445M265 540L235 555 195 562 178 580M487 508L500 560 510 640 575 655 585 670 600 685 600 715 588 740 585 765 602 775 590 782 565 760 525 725M525 725L515 740 490 750 480 765 430 750 400 782 350 795 315 768M315 768L275 790 255 795 240 778 210 770 200 730 172 722 165 690M300 590L320 600 300 610 295 630 290 665 310 690 318 720 315 768M0 572L50 575 60 598 100 595M0 520L40 525 50 560 60 598' }
  ];
  // Breaks straight runs into short, slightly irregular steps, as digitised borders have.
  function roughen(d) {
    let seed = 7;
    const rnd = () => ((seed = (seed * 16807) % 2147483647) / 2147483647 - 0.5) * 6;
    return d.split('M').filter(Boolean).map((part) => {
      const n = part.split(/[L ]/).map(Number);
      let out = `M${n[0]} ${n[1]}`;
      for (let i = 2; i < n.length; i += 2) {
        const [x0, y0, x1, y1] = n.slice(i - 2, i + 2);
        const k = Math.floor(Math.hypot(x1 - x0, y1 - y0) / 11);
        for (let j = 1; j < k; j++) out += `L${(x0 + ((x1 - x0) * j) / k + rnd()).toFixed(1)} ${(y0 + ((y1 - y0) * j) / k + rnd()).toFixed(1)}`;
        out += `L${x1} ${y1}`;
      }
      return out;
    }).join('');
  }
</script>

{#snippet toolbar(items)}
  <div class="toolbar">
    {#each items as it}
      {#if it[0] === 'H'}
        <span class="handle {it}"><i></i></span>
      {:else if it === 'A' || it === 'D'}
        <span class="drop {it}"></span>
      {:else if it === 'S'}
        <span class="sep"></span>
      {:else}
        <span class="tool"><span class:pressed={it.endsWith('*')}>
          <svg width="24" height="24" viewBox="0 0 24 24" fill="none">{@html icons[it.replace('*', '')]}</svg>
        </span></span>
      {/if}
    {/each}
    {#if items === row1}<svg class="more" width="6" height="8" fill="none" stroke="#000" stroke-width="1.600"><path d="M1 1.500L3.500 4L1 6.500M5 1.500L7.500 4"/></svg>{/if}
  </div>
{/snippet}

<div class="app">
  <header>
    <svg width="18" height="18" viewBox="0 0 18 18" fill="none"><path d="M12 14A6.200 6.200 0 1 1 14.500 9.500" stroke="#d6a323" stroke-width="3.600"/><path d="M9 9l2 5 3 2 3-2-1-3-5-3z" fill="#7e7650"/><path d="M8 8h4l1 1-4 4z" fill="#e8c45e"/></svg>
    <span class="title" use:fit={84}>*BASICO - QGIS</span>
    <svg class="win" width="104" height="14" fill="none" stroke="#888"><path d="M0 6.500h10M45.500 1.500h9v9h-9zM91 1l10 10M101 1L91 11"/></svg>
  </header>
  <nav>
    {#each menus as m}<span style:margin-left="{m.gap}px" style:width="{m.w}px"><span use:fit={m.w}>{m.pre}<u>{m.key}</u>{m.post}</span></span>{/each}
  </nav>
  {@render toolbar(row1)}
  {@render toolbar(row2)}
  <div class="strip"><i></i></div>
  <main>
    <aside>
      <div class="head"><span use:fit={31}>Capas</span>
        <svg width="26" height="12" fill="none" stroke="#555"><rect x=".5" y=".5" width="10" height="10" rx="2"/><path d="M5 3h3.500v3.500H5zM3 5h3.500v3.500H3z" fill="#f0f0f0"/><rect x="14.500" y=".5" width="10" height="10" rx="2"/><path d="M17 3l5 5M22 3l-5 5" stroke-width="1.800"/></svg>
      </div>
      <div class="ptools">
        <svg width="215" height="20" viewBox="0 0 215 20" fill="none">
          <path d="M7 10l7-6.500 1 1-5.500 8z" fill="#e9b54c" stroke="#b07a22" stroke-width=".6"/><path d="M1 9l5-2 5 4-3 5-2-1z" fill="#e8a560"/><path d="M3 11l4 4 2-3M6 8l4 3" stroke="#c0402a" stroke-width="1.200"/>
          <g transform="translate(26 1) scale(.9)">{@html icons.grp}<rect x="9" y="10" width="7.500" height="7.500" rx="1" fill="#777"/><path d="M12.700 11.500v4.500M10.500 13.700h4.500" stroke="#fff" stroke-width="1.200"/></g>
          <g transform="translate(51 2) scale(.68)">{@html icons.eye}</g>
          <path d="M77 4h12l-4.500 7v6h-3v-6z" fill="#5b8ec4" stroke="#456f9d" stroke-width=".6"/><path d="M76 2.500h14v3H76z" fill="#f1c52b"/>
          <g stroke="#ccc" stroke-width="1.500"><path d="M108 3q-5-1-5 2t4 2q-5 0-5 3t6 2M110 16v-4q3.500-4 6 0v4"/></g><path d="M122.500 8.500h8l-4 4z" fill="#aaa"/>
          {#each [138, 163] as x, i}<g transform="translate({x} 0)"><path d="M1 2v12h5M1 5h5M1 9h5" stroke="#999"/><path d="M4 4h3v3H4zM4 11h3v3H4z" fill="#f4d24b" stroke="#a88422" stroke-width=".7"/><path d={i ? 'M8 9h3v8h3V9h2l-4-6z' : 'M6 11h3V3h4v8h3l-5 6z'} fill="#5b93c8" stroke="#35608f" stroke-width=".8"/></g>{/each}
          <path d="M188.500 3.500h12v11h-12z" fill="#f4f4f4" stroke="#777" stroke-width="1.300"/><rect x="196" y="12" width="7" height="5" rx="1" fill="#d44b3b"/><path d="M197 14.500h5" stroke="#fff"/>
        </svg>
      </div>
      <div class="treebox">
        <div class="tree">
          {#each tree as [lv, arrow, cb, sym, label, w, st]}
            <div class="row l{lv} {st}">
              <span class="arrow">{#if arrow === 'v'}<i class="down"></i>{:else if arrow}<i class="right"></i>{/if}</span>
              <span class="cb {cb}">{#if cb !== 'o'}<svg width="12" height="12"><path d="M2 5.500L5 10L10.500 1.500" fill="none" stroke={cb === 'g' ? '#888' : '#000'} stroke-width="2"/></svg>{/if}</span>
              <span class="sym">
                {#if sym === 'grp'}<svg width="17" height="18" viewBox="0 0 21 20" fill="none">{@html icons.grp}</svg>
                {:else if sym}<svg width="18" height="16">{@html symbols[sym]}</svg>{/if}
              </span>
              <span class="label"><span use:fit={w}>{label}</span></span>
              {#if lv < 2}<i class="bar"></i>{/if}
            </div>
          {/each}
        </div>
        <div class="scroll"><div class="btn"><i class="up"></i></div><div class="thumb"></div><div class="track"></div><div class="btn"><i class="down"></i></div></div>
      </div>
      <div class="tabs"><div class="t1"><span use:fit={164}>Caja de herramientas de Procesos</span></div><div class="t2"><span use:fit={30}>Capas</span></div></div>
    </aside>
    <div class="split"><i></i></div>
    <section>
      <svg width="763" height="642" viewBox="0 0 763 642" fill="none">
        <g transform="translate(30 34)"><path d="M0-19L3-3 19 0 3 3 0 18-3 3-19 0-3-3z" fill="#111"/><path d="M-9-9l7 5 2-2 8-4-4 8 5 11-9-6-9 6 5-9z" fill="#111"/><path d="M0-14V0H14L3 2 0 14V0H-14L-3-2z" fill="#888"/></g>
        <text x="27" y="10" font-size="8" font-weight="700" fill="#111" font-family="Open Sans">N</text>
        {#each sheets as sh}
          <g transform="translate({sh.x - 1} {sh.y}) scale(.33333)" stroke="#000" stroke-width="6.300" stroke-linejoin="round">
            <path d={roughen(sh.s)} stroke-linecap="round" /><path d={roughen(sh.d)} stroke-dasharray="19 5 5 5" />
          </g>
        {/each}
        <path d="M292 638v-8h186v8" stroke="#000" stroke-width="1.300"/>
        <text x="371" y="623" font-size="12.500" textLength="35" lengthAdjust="spacingAndGlyphs" fill="#111" font-family="Open Sans">50 km</text>
        <text x="714" y="639" font-size="11.500" font-weight="700" textLength="58" lengthAdjust="spacingAndGlyphs" fill="#1d3022" font-family="Open Sans">SIGMENA</text>
        <g transform="translate(2 583)">
          <path d="M3.500 10L1 4l5 3 2-4 4 4 5-5 5 5 4-4 2 4 5-3-2.500 6z" fill="none" stroke="#e9c35a" stroke-width="1.200"/><g fill="#dcab28"><circle cx="1.500" cy="4" r="1.500"/><circle cx="8.500" cy="2.500" r="1.500"/><circle cx="17" cy="1.700" r="1.500"/><circle cx="25.500" cy="2.500" r="1.500"/><circle cx="32.500" cy="4" r="1.500"/></g><path d="M4 13q13-4 26 0" stroke="#dcab28" stroke-width="2.200"/>
          <path d="M.5 17h33v26q-2 13-16.500 14Q2 56 .5 43z" fill="#fff"/>
          <path d="M.5 17H17v19H.5zM17 36h16.500v7q-2 13-16.500 14z" fill="#c5301f"/>
          <path d="M4 32h10v-8h-1v-4h-2v-2H8v2H6v4H4zM20 51h10v-8h-1v-3h-2v-2h-3v2h-2v3h-2z" fill="#dca130"/><path d="M7 32v-4h3v4M23 51v-4h3v4M5 25h8M21 44h8" stroke="#a53a20"/>
          {#each [[19, 18], [2, 38]] as [x, y]}<path transform="translate({x} {y})" d="M1 2l3-1 2 3 4-2 2 2-3 3 3 2-3 2 2 3h-3l-2-3-4 3 2-5-3-1M10 13l3-3v-5" stroke="#8b4787" stroke-width="1.400"/>{/each}
          <path d="M.5 17h33v26q-2 13-16.500 14Q2 56 .5 43zM17 17v40M0 36h34" stroke="#666"/>
        </g>
      </svg>
    </section>
  </main>
  <footer>
    <div class="search"><svg width="14" height="14" fill="none" stroke="#888" stroke-width="1.300"><circle cx="5.500" cy="5.500" r="4.300"/><path d="M8.500 8.500l4 4"/></svg><span use:fit={142}>Escriba para localizar (Ctrl+K)</span></div>
    <span class="lab" style:margin-left="84px" style:width="63px"><span use:fit={59}>Coordenada</span></span>
    <div class="field" style:width="97px"><span use:fit={82}>521211,4512560</span></div>
    <svg class="mid" width="26" height="20" fill="none" stroke="#444" stroke-width="1.200"><path d="M7 3l5 8M10 2l3 8M13 3l2 5M6 6l7 6M16 5l3-2M6 11q2 6 7 5"/><circle cx="11" cy="9" r="3"/><circle cx="16" cy="13.500" r="3"/></svg>
    <span class="lab" style:margin-left="7px" style:width="34px"><span use:fit={30}>Escala</span></span>
    <div class="field combo" style:width="80px"><span use:fit={51}>1:1017874</span><b><i class="down"></i></b></div>
    <svg class="mid lock" width="14" height="18"><path d="M3 8V5q0-3.500 4-3.500T11 5v3" fill="none" stroke="#888" stroke-width="1.600"/><rect x="1" y="8" width="12" height="8.500" rx="1.500" fill="#666"/></svg>
    <span class="lab" style:margin-left="7px" style:width="62px"><span use:fit={58}>Amplificador</span></span>
    <div class="field spin" style:width="87px"><span use:fit={28}>100%</span><b><i class="up"></i><i class="down"></i></b></div>
    <span class="lab" style:margin-left="9px" style:width="52px"><span use:fit={43}>Rotación</span></span>
    <div class="field spin" style:width="84px"><span use:fit={25}>0,0 °</span><b><i class="up"></i><i class="down"></i></b></div>
    <span class="cb x" style:margin-left="6px"><svg width="12" height="12"><path d="M2 5.500L5 10L10.500 1.500" fill="none" stroke="#000" stroke-width="2"/></svg></span>
    <span class="lab" style:margin-left="4px" style:width="78px"><span use:fit={60}>Representar</span></span>
    <svg class="mid" width="17" height="16" fill="none"><circle cx="8" cy="8" r="6" fill="#777"/><path d="M2 8h12M8 2v12M3 5h10M3 11h10M8 2q-6 6 0 12M8 2q6 6 0 12" stroke="#bbb" stroke-width=".8"/><path d="M0 8h2.500M13.500 8H16M8 0v2.500M8 13.500V16" stroke="#777" stroke-width="1.500"/></svg>
    <span class="lab" style:margin-left="2px" style:width="79px"><span use:fit={59}>EPSG:25830</span></span>
    <svg class="mid" width="18" height="16"><path d="M8 1c9 0 9 10 3 11l2 4-5-3.500C-2 12-1 1 8 1z" fill="#555"/><path d="M4.500 7h1.500M7.500 7H9M10.500 7H12" stroke="#fff" stroke-width="1.500"/></svg>
  </footer>
</div>

<style>
  :global(body) { overflow: hidden; }
  .app { width: 1213px; height: 811px; overflow: hidden; display: flex; flex-direction: column; background: #f0f0f0; font: 12px/16px "Open Sans", "Noto Sans", sans-serif; color: #000; white-space: nowrap; }
  .app * { box-sizing: border-box; }
  svg { display: block; flex: none; }
  header { height: 29px; flex: none; background: #fff; display: flex; align-items: center; padding: 0 9px 2px 6px; color: #777; }
  .title { margin-left: 4px; }
  .win { margin-left: auto; margin-right: -3px; }
  nav { height: 20px; flex: none; display: flex; align-items: center; padding-top: 1px; color: #8c8c8c; border-bottom: 1px solid #cfcfcf; }
  nav > span { flex: none; }
  u { text-underline-offset: 2px; }
  .toolbar { height: 39px; flex: none; display: flex; align-items: center; background: linear-gradient(#fafafa, #eee); border-bottom: 1px solid #b0b0b0; position: relative; }
  .tool { width: 33px; flex: none; display: flex; justify-content: center; }
  .tool > span { width: 32px; height: 32px; display: grid; place-items: center; border-radius: 2px; }
  .tool .pressed { background: #dadada; border: 1px solid #a0a0a0; }
  .handle { width: 16px; flex: none; display: flex; justify-content: center; }
  .H0 { width: 11.5px; }
  .H1 { width: 14px; }
  .handle i { width: 5px; height: 18px; background: radial-gradient(circle, #a8a8a8 .8px, transparent 1px) 0 0 / 3px 3px; }
  .drop { width: 12px; flex: none; display: flex; justify-content: center; }
  .drop::before { content: ''; border: 4px solid transparent; border-top-color: #999; border-bottom: 0; }
  .drop.D::before { border-top-color: #666; }
  .sep { width: 9.5px; height: 20px; flex: none; background: linear-gradient(#c8c8c8, #c8c8c8) center / 1px 100% no-repeat; }
  .more { margin-left: 16px; }
  .strip { height: 17px; flex: none; background: linear-gradient(#fafafa, #eee); border-bottom: 1px solid #b8b8b8; padding-left: 4px; }
  .strip i { display: block; width: 5px; height: 16px; background: radial-gradient(circle, #a8a8a8 .8px, transparent 1px) 0 0 / 3px 3px; }
  main { height: 643px; flex: none; display: flex; }
  aside { width: 443px; flex: none; display: flex; flex-direction: column; }
  .head { height: 20px; display: flex; justify-content: space-between; align-items: center; padding: 0 1px 0 3px; }
  .ptools { height: 30px; padding: 4px 0 0 7px; }
  .treebox { height: 568px; border: solid #b4b4b4; border-width: 1px 1px 1px 0; display: flex; background: #fff; }
  .tree { width: 428px; overflow: hidden; }
  .row { height: 18px; display: flex; align-items: center; }
  .row.t { height: 20px; }
  .arrow { width: 20px; height: 18px; flex: none; display: grid; place-items: center; }
  .l1 .arrow { margin-left: 20px; }
  .l2 .arrow { margin-left: 40px; }
  .arrow i { border: 4px solid transparent; }
  .down { border: 4px solid transparent; border-top: 4px solid #555 !important; border-bottom: 0 !important; }
  .up { border: 4px solid transparent; border-bottom: 4px solid #555; border-top: 0; }
  .right { border-left: 4px solid #555 !important; border-right: 0 !important; }
  .cb { width: 14px; height: 14px; margin: 0 3px; flex: none; border: 1px solid #b5b5b5; background: #fff; }
  .sym { width: 25px; flex: none; padding-left: 3px; }
  .l2 .sym { width: 27px; }
  .label { flex: 1; padding-top: 2px; }
  .row.i { color: #777; font-weight: 700; font-style: italic; }
  .row.b { font-weight: 700; }
  .bar { width: 3px; height: 16px; background: #e0e0e0; margin-right: 1px; }
  .scroll { width: 14px; border-left: 1px solid #b8b8b8; display: flex; flex-direction: column; }
  .btn { height: 14px; flex: none; display: grid; place-items: center; background: #f8f8f8; border-bottom: 1px solid #b8b8b8; }
  .thumb { height: 401px; background: linear-gradient(90deg, #fff, #f2f2f2); border-bottom: 1px solid #b0b0b0; }
  .track { flex: 1; background: #e0e0e0; border-bottom: 1px solid #b8b8b8; }
  .tabs { display: flex; align-items: flex-start; height: 25px; }
  .t1 { width: 187px; height: 21px; margin-top: 1px; border: solid #b4b4b4; border-width: 1px 0 1px; background: #dcdcdc; padding: 2px 0 0 10px; font-size: 11.5px; }
  .t2 { width: 54px; height: 23px; border: 1px solid #b4b4b4; border-top: 0; border-radius: 0 0 2px 2px; background: #f6f6f6; padding: 5px 0 0 10px; font-size: 11.5px; }
  .split { width: 6px; flex: none; display: flex; align-items: center; justify-content: center; }
  .split i { height: 17px; width: 2px; background: radial-gradient(circle, #aaa .8px, transparent 1px) 0 0 / 3px 3px; }
  section { flex: 1; border: solid #a8a8a8; border-width: 1px 0 1px 1px; background: #fff; overflow: hidden; margin-top: -1px; }
  footer { height: 26px; display: flex; align-items: flex-start; padding: 3px 0 0 3px; font-size: 11.5px; }
  .search, .field { height: 24px; flex: none; background: #fff; border: 1px solid #b0b0b0; border-radius: 2px; display: flex; align-items: center; }
  .search { width: 255px; gap: 5px; padding: 0 0 1px 8px; color: #777; }
  .search span { margin-left: 1px; }
  .field { padding-left: 6px; }
  .combo, .spin { padding-left: 4px; justify-content: space-between; }
  .field b { width: 15px; height: 100%; border-left: 1px solid #c4c4c4; background: #f4f4f4; display: flex; flex-direction: column; align-items: center; justify-content: center; gap: 5px; }
  .lab { flex: none; padding-top: 4px; }
  .mid { margin-top: 3px; }
  .lock { margin-left: 12px; }
  footer .cb { margin: 5px 0 0; }
</style>
